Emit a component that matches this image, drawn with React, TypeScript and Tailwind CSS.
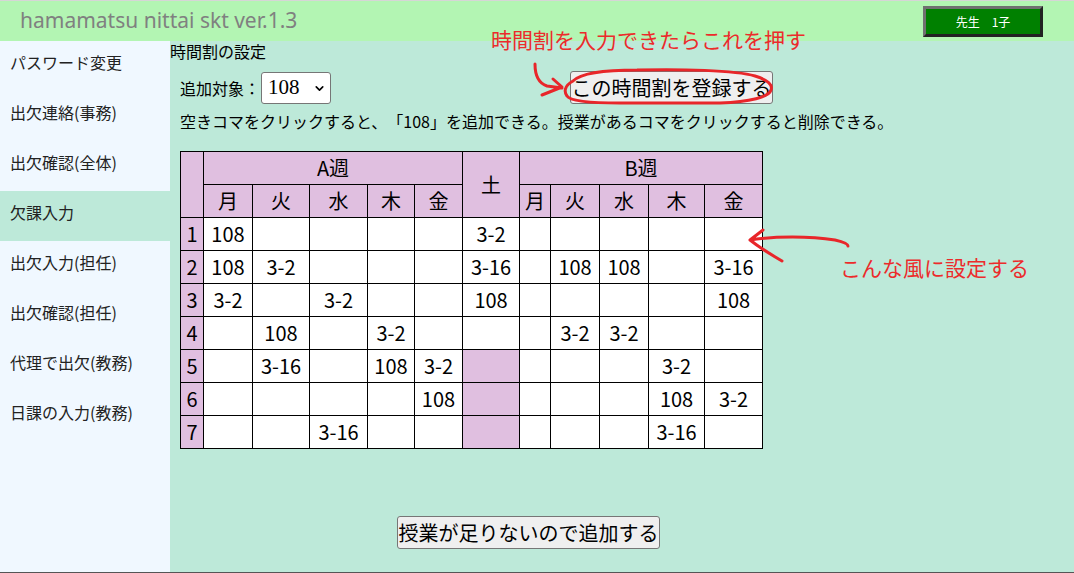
import { ChevronDown } from "lucide-react";

type Cell = string | null;

const menus = [
  "パスワード変更",
  "出欠連絡(事務)",
  "出欠確認(全体)",
  "欠課入力",
  "出欠入力(担任)",
  "出欠確認(担任)",
  "代理で出欠(教務)",
  "日課の入力(教務)",
];

const days = ["月", "火", "水", "木", "金"];

// each row: A週 x5, 土 (null = closed), B週 x5
const rows: Cell[][] = [
  ["108", "", "", "", "", "3-2", "", "", "", "", ""],
  ["108", "3-2", "", "", "", "3-16", "", "108", "108", "", "3-16"],
  ["3-2", "", "3-2", "", "", "108", "", "", "", "", "108"],
  ["", "108", "", "3-2", "", "", "", "3-2", "3-2", "", ""],
  ["", "3-16", "", "108", "3-2", null, "", "", "", "3-2", ""],
  ["", "", "", "", "108", null, "", "", "", "108", "3-2"],
  ["", "", "3-16", "", "", null, "", "", "", "3-16", ""],
];

const colW = ["w-[23px]", "w-[49px]", "w-[57px]", "w-[58px]", "w-[47px]", "w-[48px]", "w-[57px]", "w-[31px]", "w-[49px]", "w-[49px]", "w-[56px]", "w-[58px]"];

const jp = "font-['Noto_Sans_CJK_JP',sans-serif]";

const Timetable = () => (
  <table className="table-fixed border-collapse w-[583px] text-[20px] leading-none text-black">
    <colgroup>
      {colW.map((w, i) => (
        <col key={i} className={w} />
      ))}
    </colgroup>
    <thead>
      <tr className="h-[33px]">
        <th rowSpan={2} className="border border-black bg-[#e0bfe0]"></th>
        <th colSpan={5} className="border border-black bg-[#e0bfe0] font-normal">A週</th>
        <th rowSpan={2} className="border border-black bg-[#e0bfe0] font-normal">土</th>
        <th colSpan={5} className="border border-black bg-[#e0bfe0] font-normal">B週</th>
      </tr>
      <tr className="h-[33px]">
        {[...days, ...days].map((d, i) => (
          <th key={i} className="border border-black bg-[#e0bfe0] font-normal">
            {d}
          </th>
        ))}
      </tr>
    </thead>
    <tbody>
      {rows.map((r, ri) => (
        <tr key={ri} className="h-[33px]">
          <td className="border border-black bg-[#e0bfe0] text-center">{ri + 1}</td>
          {r.map((c, ci) =>
            c === null ? (
              <td key={ci} className="border border-black bg-[#e0bfe0]"></td>
            ) : (
              <td key={ci} className="border border-black bg-white text-center whitespace-nowrap">
                {c}
              </td>
            )
          )}
        </tr>
      ))}
    </tbody>
  </table>
);

const App = () => {
  return (
    <div className={`relative w-[1074px] h-[573px] overflow-hidden flex flex-col ${jp} text-[#222] [text-spacing-trim:space-all]`}>
      <header className="h-[41px] shrink-0 bg-[#b3f5b3] border-t border-[#d6d6d6] flex items-center justify-between pl-[20px] pr-[31px]">
        <h1 className="text-[21px] text-[#808080] font-['Noto_Sans',sans-serif] leading-none pb-[2px]">
          hamamatsu nittai skt ver.1.3
        </h1>
        <button className="w-[120px] h-[31px] bg-[#008000] text-white text-[12px] border-[3px] border-t-[#707070] border-l-[#707070] border-r-[#222] border-b-[#222] mt-[1px]">
          先生　1子
        </button>
      </header>

      <div className="flex flex-1 border-b border-[#555]">
        <nav className="w-[170px] shrink-0 bg-[#f0f8ff]">
          {menus.map((m) => (
            <div
              key={m}
              className={`h-[50px] pl-[10px] pt-[9px] text-[16px] leading-[24px] ${m === "欠課入力" ? "bg-[#bde9d9]" : ""}`}
            >
              {m}
            </div>
          ))}
        </nav>

        <main className="flex-1 bg-[#bde9d9] flex flex-col text-black">
          <p className="text-[16px] leading-[20px]">時間割の設定</p>
          <div className="flex items-center mt-[10px] pl-[10px]">
            <span className="text-[16px]">追加対象：</span>
            <div className="relative ml-[1px]">
              <select className="appearance-none w-[70px] h-[32px] bg-white border border-[#767676] rounded-[3px] pl-[6px] text-[21px] font-['Liberation_Serif',serif] leading-none outline-none">
                <option>108</option>
              </select>
              <ChevronDown className="absolute right-[5px] top-[10px] w-[13px] h-[13px] pointer-events-none" strokeWidth={3} />
            </div>
            <button className="ml-[239px] w-[203px] h-[33px] bg-[#efefef] border border-[#767676] rounded-[3px] text-[20px] leading-none whitespace-nowrap">
              この時間割を登録する
            </button>
          </div>
          <p className="text-[16px] leading-[24px] mt-[5px] pl-[10px]">
            空きコマをクリックすると、「108」を追加できる。授業があるコマをクリックすると削除できる。
          </p>
          <div className="mt-[18px] pl-[10px]">
            <Timetable />
          </div>
          <div className="mt-[67px] pl-[227px]">
            <button className="w-[263px] h-[33px] bg-[#efefef] border border-[#767676] rounded-[3px] text-[20px] leading-none whitespace-nowrap">
              授業が足りないので追加する
            </button>
          </div>
        </main>
      </div>

      {/* hand-drawn notes on top of the screenshot */}
      <span className="absolute left-[491px] top-[29px] text-[21px] leading-none text-[#ec2b2b]">
        時間割を入力できたらこれを押す
      </span>
      <span className="absolute left-[840px] top-[257px] text-[21px] leading-none text-[#ec2b2b]">
        こんな風に設定する
      </span>
      <svg className="absolute inset-0 pointer-events-none" width="1074" height="573" viewBox="0 0 1074 573" fill="none">
        <g stroke="#e8262a" strokeWidth="3" strokeLinecap="round" strokeLinejoin="round">
          <path d="M535 64 C535 74 538 83 547 86 L562 88 M542 95 L562 87 L553 79" />
          <path d="M573 81 C580 74 600 70 637 70 C680 69 735 70 755 76 C768 80 773 85 771 90 C769 97 750 102 720 103 L620 103 C590 103 570 101 567 96 C564 92 564 86 573 81 Z" />
          <path d="M750 240 C775 236 810 236 835 240 C844 242 848 244 848 246 M763 230 L750 240 C760 248 770 254 782 261" />
        </g>
      </svg>
    </div>
  );
};

export default App;
